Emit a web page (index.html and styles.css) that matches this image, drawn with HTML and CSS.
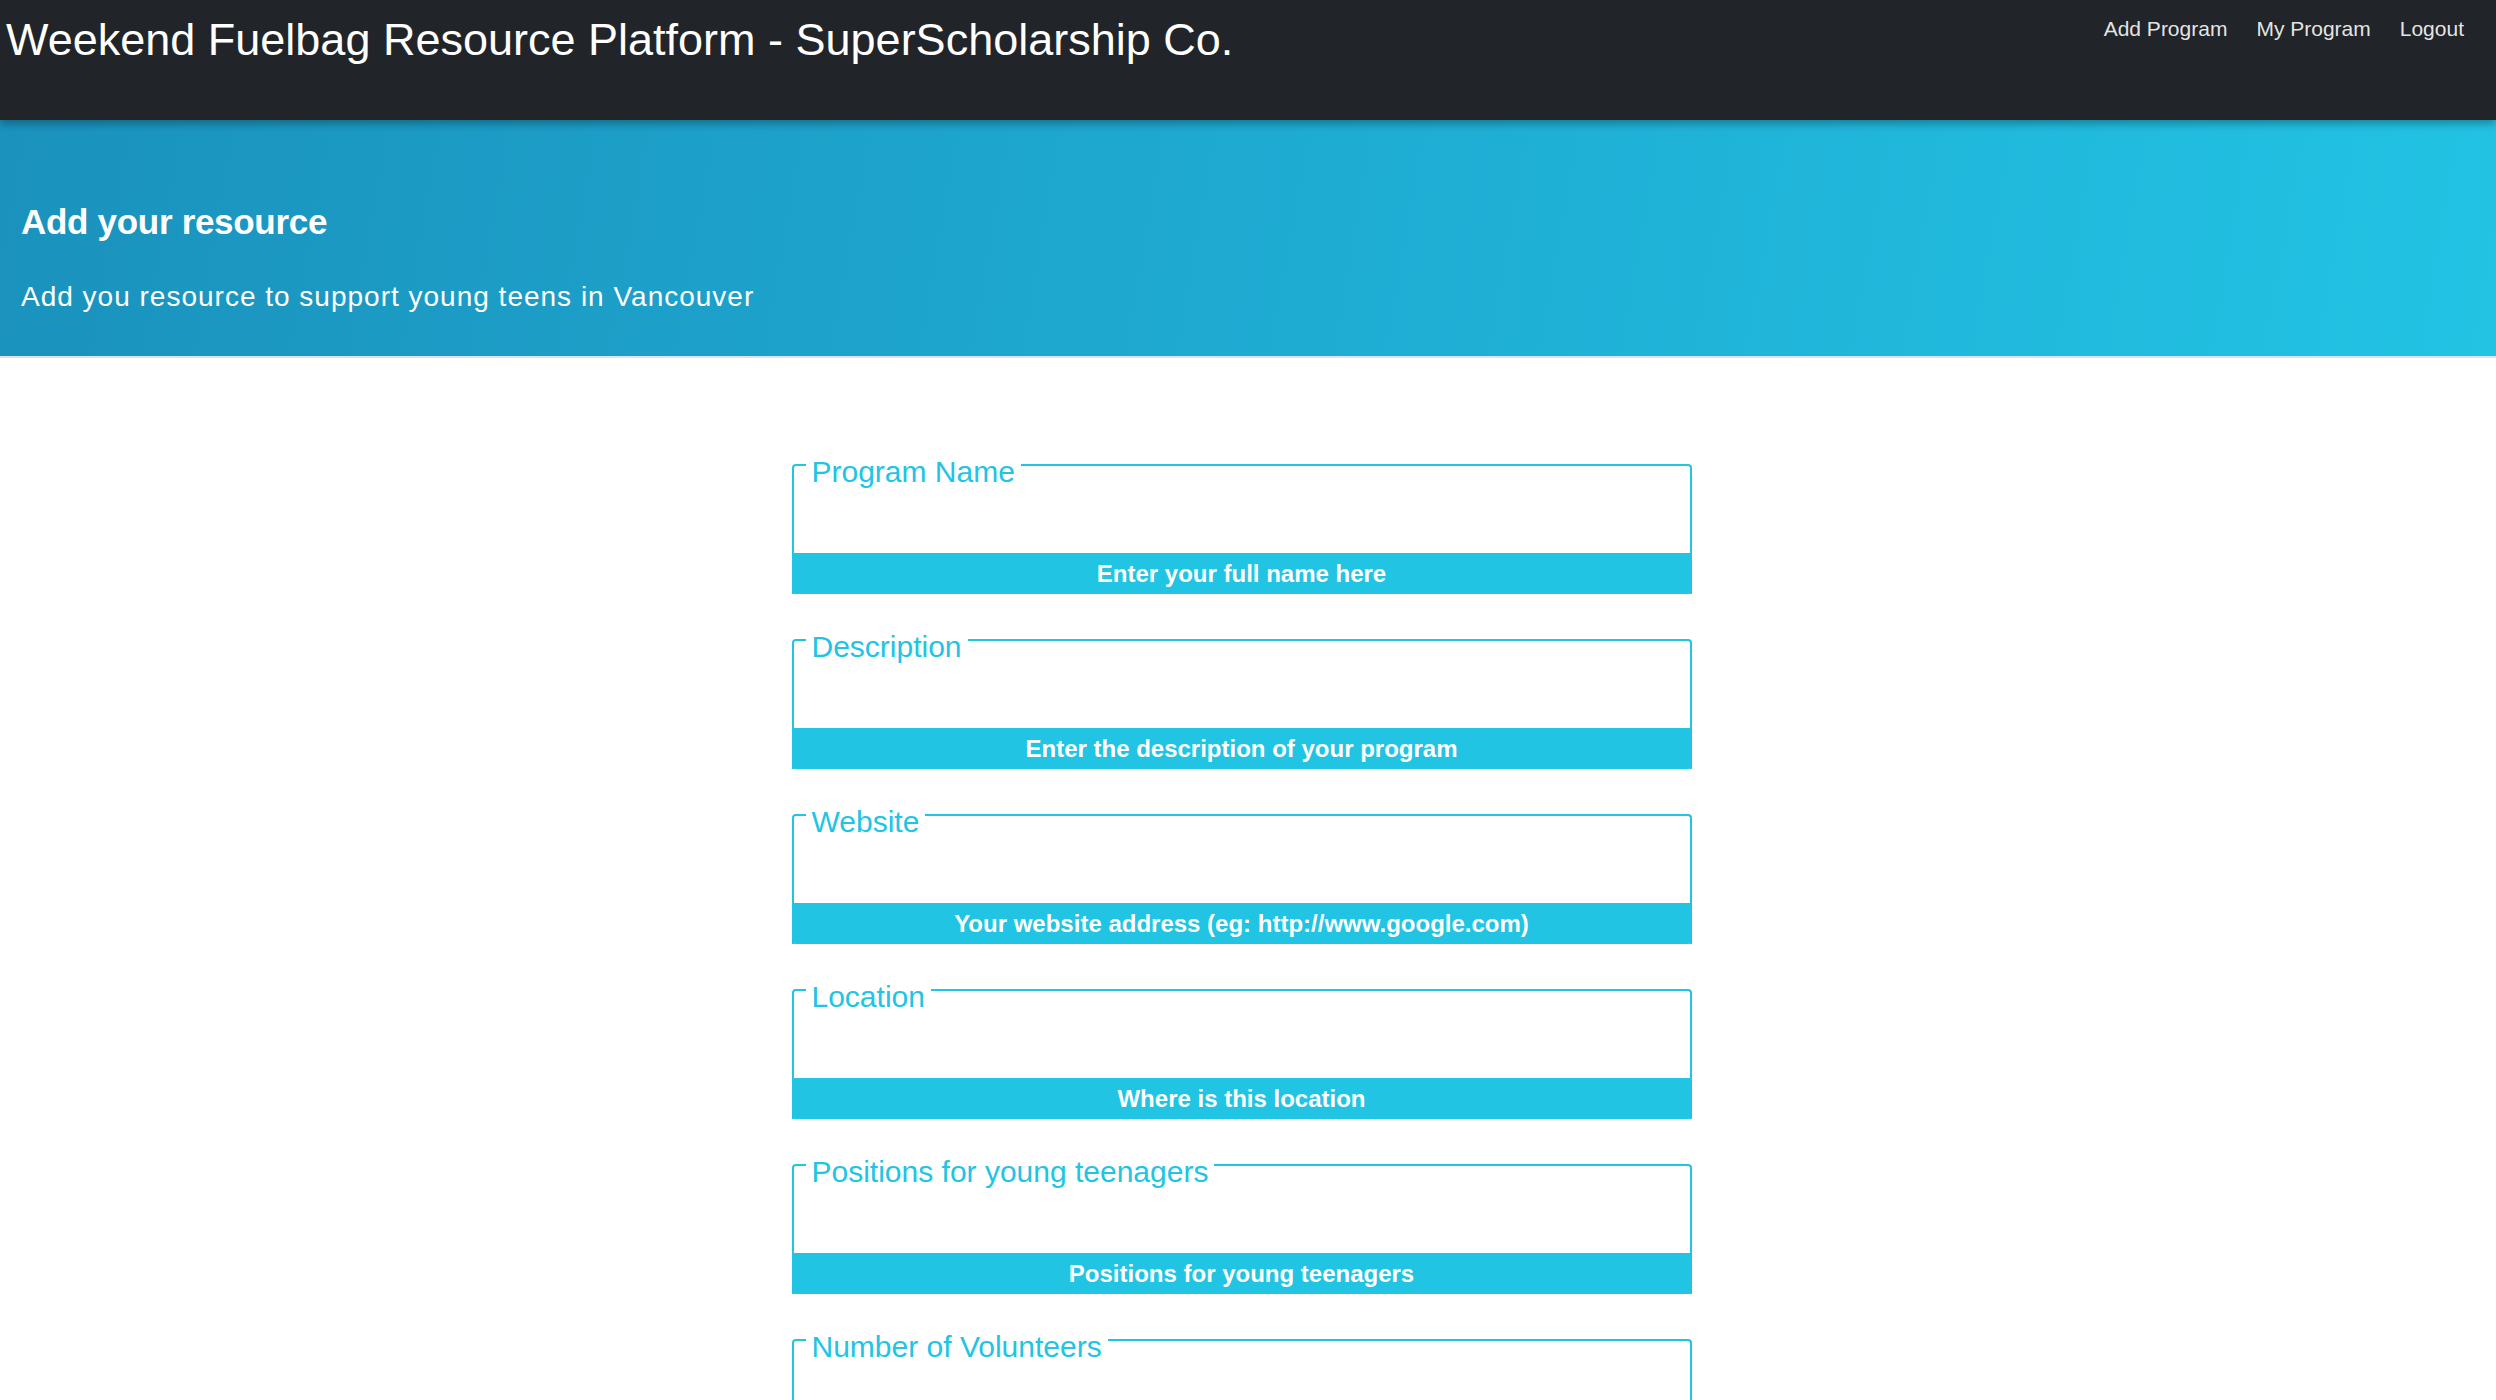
FILE: index.html
```html
<!DOCTYPE html>
<html lang="en">
<head>
<meta charset="utf-8">
<title>Weekend Fuelbag Resource Platform</title>
<link rel="stylesheet" href="styles.css">
</head>
<body>
<header class="topbar">
  <div class="brand">Weekend Fuelbag Resource Platform - SuperScholarship Co.</div>
  <nav class="nav">
    <a href="#">Add Program</a>
    <a href="#">My Program</a>
    <a href="#">Logout</a>
  </nav>
</header>
<section class="hero">
  <h1>Add your resource</h1>
  <p>Add you resource to support young teens in Vancouver</p>
</section>
<main class="content">
  <form class="form">
    <fieldset class="field">
      <legend>Program Name</legend>
      <input type="text" class="input">
      <div class="hint">Enter your full name here</div>
    </fieldset>
    <fieldset class="field">
      <legend>Description</legend>
      <input type="text" class="input">
      <div class="hint">Enter the description of your program</div>
    </fieldset>
    <fieldset class="field">
      <legend>Website</legend>
      <input type="text" class="input">
      <div class="hint">Your website address (eg: http://www.google.com)</div>
    </fieldset>
    <fieldset class="field">
      <legend>Location</legend>
      <input type="text" class="input">
      <div class="hint">Where is this location</div>
    </fieldset>
    <fieldset class="field">
      <legend>Positions for young teenagers</legend>
      <input type="text" class="input">
      <div class="hint">Positions for young teenagers</div>
    </fieldset>
    <fieldset class="field">
      <legend>Number of Volunteers</legend>
      <input type="text" class="input">
      <div class="hint">Number of volunteers needed</div>
    </fieldset>
  </form>
</main>
</body>
</html>
```
FILE: styles.css
```css
* { box-sizing: border-box; }
html, body { margin: 0; padding: 0; }
body {
  font-family: "Liberation Sans", Arial, Helvetica, sans-serif;
  background: #ffffff;
  color: #212529;
}
.topbar {
  position: relative;
  z-index: 2;
  height: 120px;
  background: #212529;
  display: flex;
  justify-content: space-between;
  align-items: flex-start;
  box-shadow: 0 4px 8px rgba(0,0,0,0.3);
}
.brand {
  color: #ffffff;
  font-size: 45px;
  line-height: 1;
  padding: 17px 0 0 6px;
}
.nav {
  display: flex;
  gap: 29px;
  padding: 18px 32px 0 0;
}
.nav a {
  color: rgba(255,255,255,0.9);
  text-decoration: none;
  font-size: 21px;
  line-height: 1;
}
.hero {
  height: 238px;
  background: linear-gradient(100deg, #1a92bd 0%, #1ea8d0 45%, #22c3e4 100%);
  border-bottom: 2px solid #dde3ec;
  padding: 0 21px;
  color: #ffffff;
  display: flex;
  flex-direction: column;
}
.hero h1 {
  margin: 84px 0 0 0;
  font-size: 35px;
  font-weight: bold;
  line-height: 1;
  letter-spacing: -0.3px;
}
.hero p {
  margin: 44px 0 0 0;
  font-size: 28px;
  line-height: 1;
  letter-spacing: 1px;
}
.content {
  display: flex;
  justify-content: center;
  padding: 85px 13px 0 0;
}
.form {
  width: 900px;
  display: flex;
  flex-direction: column;
  gap: 24px;
}
.field {
  margin: 0;
  padding: 0;
  border: 2px solid #21c4e3;
  border-bottom: 0;
  border-radius: 4px 4px 0 0;
  min-width: 0;
}
.field legend {
  color: #21c4e3;
  font-size: 30px;
  line-height: 1;
  padding: 14px 6px 0 6px;
  margin-left: 12px;
}
.input {
  display: block;
  height: 66px;
  border: 0;
  outline: none;
  background: transparent;
  font-size: 24px;
  width: 100%;
  padding: 0 12px;
}
.hint {
  height: 41px;
  margin: 0 -2px;
  border-radius: 0 0 4px 4px;
  background: #21c4e3;
  color: #ffffff;
  font-size: 24px;
  font-weight: bold;
  text-align: center;
  line-height: 41px;
}
```
